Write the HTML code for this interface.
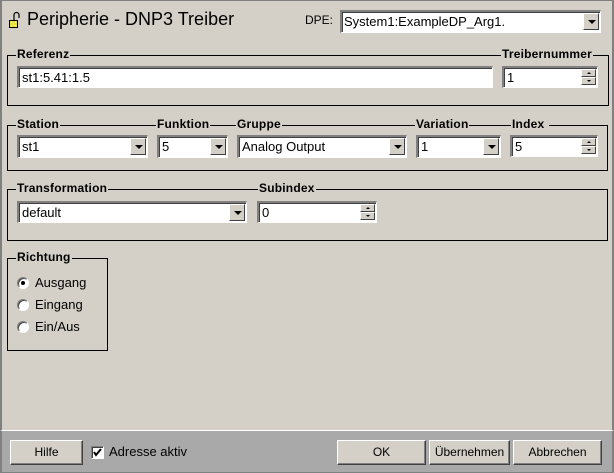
<!DOCTYPE html>
<html><head><meta charset="utf-8"><style>
*{box-sizing:border-box;margin:0;padding:0}
body{width:614px;height:473px;background:#d4d0c8;font-family:"Liberation Sans",Arial,sans-serif;font-size:12px;color:#000;position:relative;overflow:hidden}
.a{position:absolute}
.frame{left:0;top:0;width:614px;height:473px;border-left:2px solid #808080;border-right:2px solid #808080;border-top:1px solid #808080}
.grp{position:absolute;border:1px solid #000}
.lbl{position:absolute;background:#d4d0c8;font-weight:bold;font-size:12px;line-height:13px;padding:0 1px;letter-spacing:0.2px}
.inp{position:absolute;background:#fff;border-top:2px solid #808080;border-left:2px solid #808080;border-bottom:1px solid #fff;border-right:1px solid #fff;box-shadow:inset 1px 1px 0 #404040;padding:2px 3px;line-height:16px;font-size:13px}
.dd{position:absolute;right:1px;top:1px;width:16px;height:17px;background:#d4d0c8;border-top:1px solid #fff;border-left:1px solid #fff;border-right:1px solid #404040;border-bottom:1px solid #404040}
.dd:after{content:"";position:absolute;left:4px;top:6px;border-left:4px solid transparent;border-right:4px solid transparent;border-top:4px solid #000}
.sp{position:absolute;right:1px;width:15px;height:8px;background:#d4d0c8;border-top:1px solid #fff;border-left:1px solid #fff;border-right:1px solid #404040;border-bottom:1px solid #404040}
.sp.u{top:1px}.sp.d{top:9px}
.sp.u:after{content:"";position:absolute;left:5px;top:2px;border-left:2px solid transparent;border-right:2px solid transparent;border-bottom:2px solid #000}
.sp.d:after{content:"";position:absolute;left:5px;top:2px;border-left:2px solid transparent;border-right:2px solid transparent;border-top:2px solid #000}
.btn{position:absolute;background:#d4d0c8;border-top:1px solid #fff;border-left:1px solid #fff;border-right:1px solid #404040;border-bottom:1px solid #404040;box-shadow:inset -1px -1px 0 #808080;text-align:center;line-height:22px;font-size:12px}
.rad{position:absolute;width:12px;height:12px;border-radius:50%;background:#fff;border:1px solid;border-color:#808080 #fff #fff #808080;box-shadow:inset 1px 1px 0 #404040}
.rt{position:absolute;font-size:13px}
</style></head><body>
<div class="a frame"></div>
<svg class="a" style="left:8px;top:11px" width="14" height="18" viewBox="0 0 14 18"><path d="M6 9V4a2.5 2.5 0 0 1 5 0v3" fill="none" stroke="#000" stroke-width="1.2"/><rect x="1.5" y="9.5" width="8" height="7" fill="#e8e040" stroke="#000"/><path d="M3 11h1M5 13h1M7 11h1M3 15h1M7 15h1" stroke="#fff"/></svg>
<div class="a" style="left:27px;top:9px;font-size:18px;line-height:21px">Peripherie - DNP3 Treiber</div>
<div class="a" style="left:305px;top:13px;font-size:12px">DPE:</div>
<div class="inp" style="left:340px;top:10px;width:261px;height:23px;padding-left:2px;line-height:15px">System1:ExampleDP_Arg1.<div class="dd"></div></div>

<div class="grp" style="left:7px;top:55px;width:602px;height:51px"></div>
<div class="lbl" style="left:16px;top:48px">Referenz</div>
<div class="lbl" style="left:501px;top:48px">Treibernummer</div>
<div class="inp" style="left:17px;top:66px;width:476px;height:22px">st1:5.41:1.5</div>
<div class="inp" style="left:502px;top:66px;width:96px;height:22px">1<div class="sp u"></div><div class="sp d"></div></div>

<div class="grp" style="left:7px;top:125px;width:601px;height:46px"></div>
<div class="lbl" style="left:16px;top:118px">Station</div>
<div class="lbl" style="left:156px;top:118px">Funktion</div>
<div class="lbl" style="left:236px;top:118px">Gruppe</div>
<div class="lbl" style="left:415px;top:118px">Variation</div>
<div class="lbl" style="left:511px;top:118px;padding-right:5px">Index</div>
<div class="inp" style="left:17px;top:135px;width:131px;height:23px">st1<div class="dd"></div></div>
<div class="inp" style="left:157px;top:135px;width:71px;height:23px">5<div class="dd"></div></div>
<div class="inp" style="left:237px;top:135px;width:170px;height:23px">Analog Output<div class="dd"></div></div>
<div class="inp" style="left:416px;top:135px;width:85px;height:23px">1<div class="dd"></div></div>
<div class="inp" style="left:510px;top:135px;width:88px;height:22px">5<div class="sp u"></div><div class="sp d"></div></div>

<div class="grp" style="left:7px;top:189px;width:601px;height:52px"></div>
<div class="lbl" style="left:16px;top:182px">Transformation</div>
<div class="lbl" style="left:258px;top:182px">Subindex</div>
<div class="inp" style="left:17px;top:201px;width:230px;height:22px">default<div class="dd"></div></div>
<div class="inp" style="left:257px;top:201px;width:120px;height:22px">0<div class="sp u"></div><div class="sp d"></div></div>

<div class="grp" style="left:7px;top:258px;width:101px;height:93px"></div>
<div class="lbl" style="left:16px;top:251px">Richtung</div>
<div class="rad" style="left:17px;top:277px"><div class="a" style="left:3px;top:3px;width:4px;height:4px;background:#000;border-radius:50%"></div></div>
<div class="rt" style="left:35px;top:275px">Ausgang</div>
<div class="rad" style="left:17px;top:299px"></div>
<div class="rt" style="left:35px;top:297px">Eingang</div>
<div class="rad" style="left:17px;top:321px"></div>
<div class="rt" style="left:35px;top:319px">Ein/Aus</div>

<div class="a" style="left:0;top:430px;width:614px;height:43px;background:#a9a9a9;border-top:1px solid #fff;border-left:2px solid #808080;border-right:2px solid #808080;border-bottom:1px solid #808080"></div>
<div class="btn" style="left:10px;top:440px;width:73px;height:25px">Hilfe</div>
<div class="a" style="left:91px;top:446px;width:13px;height:13px;background:#fff;border:1px solid;border-color:#808080 #fff #fff #808080;box-shadow:inset 1px 1px 0 #404040"><svg class="a" style="left:1px;top:1px" width="9" height="9"><path d="M1 4l2 3 5-6" fill="none" stroke="#000" stroke-width="2"/></svg></div>
<div class="a" style="left:109px;top:444px;font-size:13px">Adresse aktiv</div>
<div class="btn" style="left:337px;top:440px;width:89px;height:25px">OK</div>
<div class="btn" style="left:429px;top:440px;width:81px;height:25px">Übernehmen</div>
<div class="btn" style="left:513px;top:440px;width:89px;height:25px">Abbrechen</div>
</body></html>
